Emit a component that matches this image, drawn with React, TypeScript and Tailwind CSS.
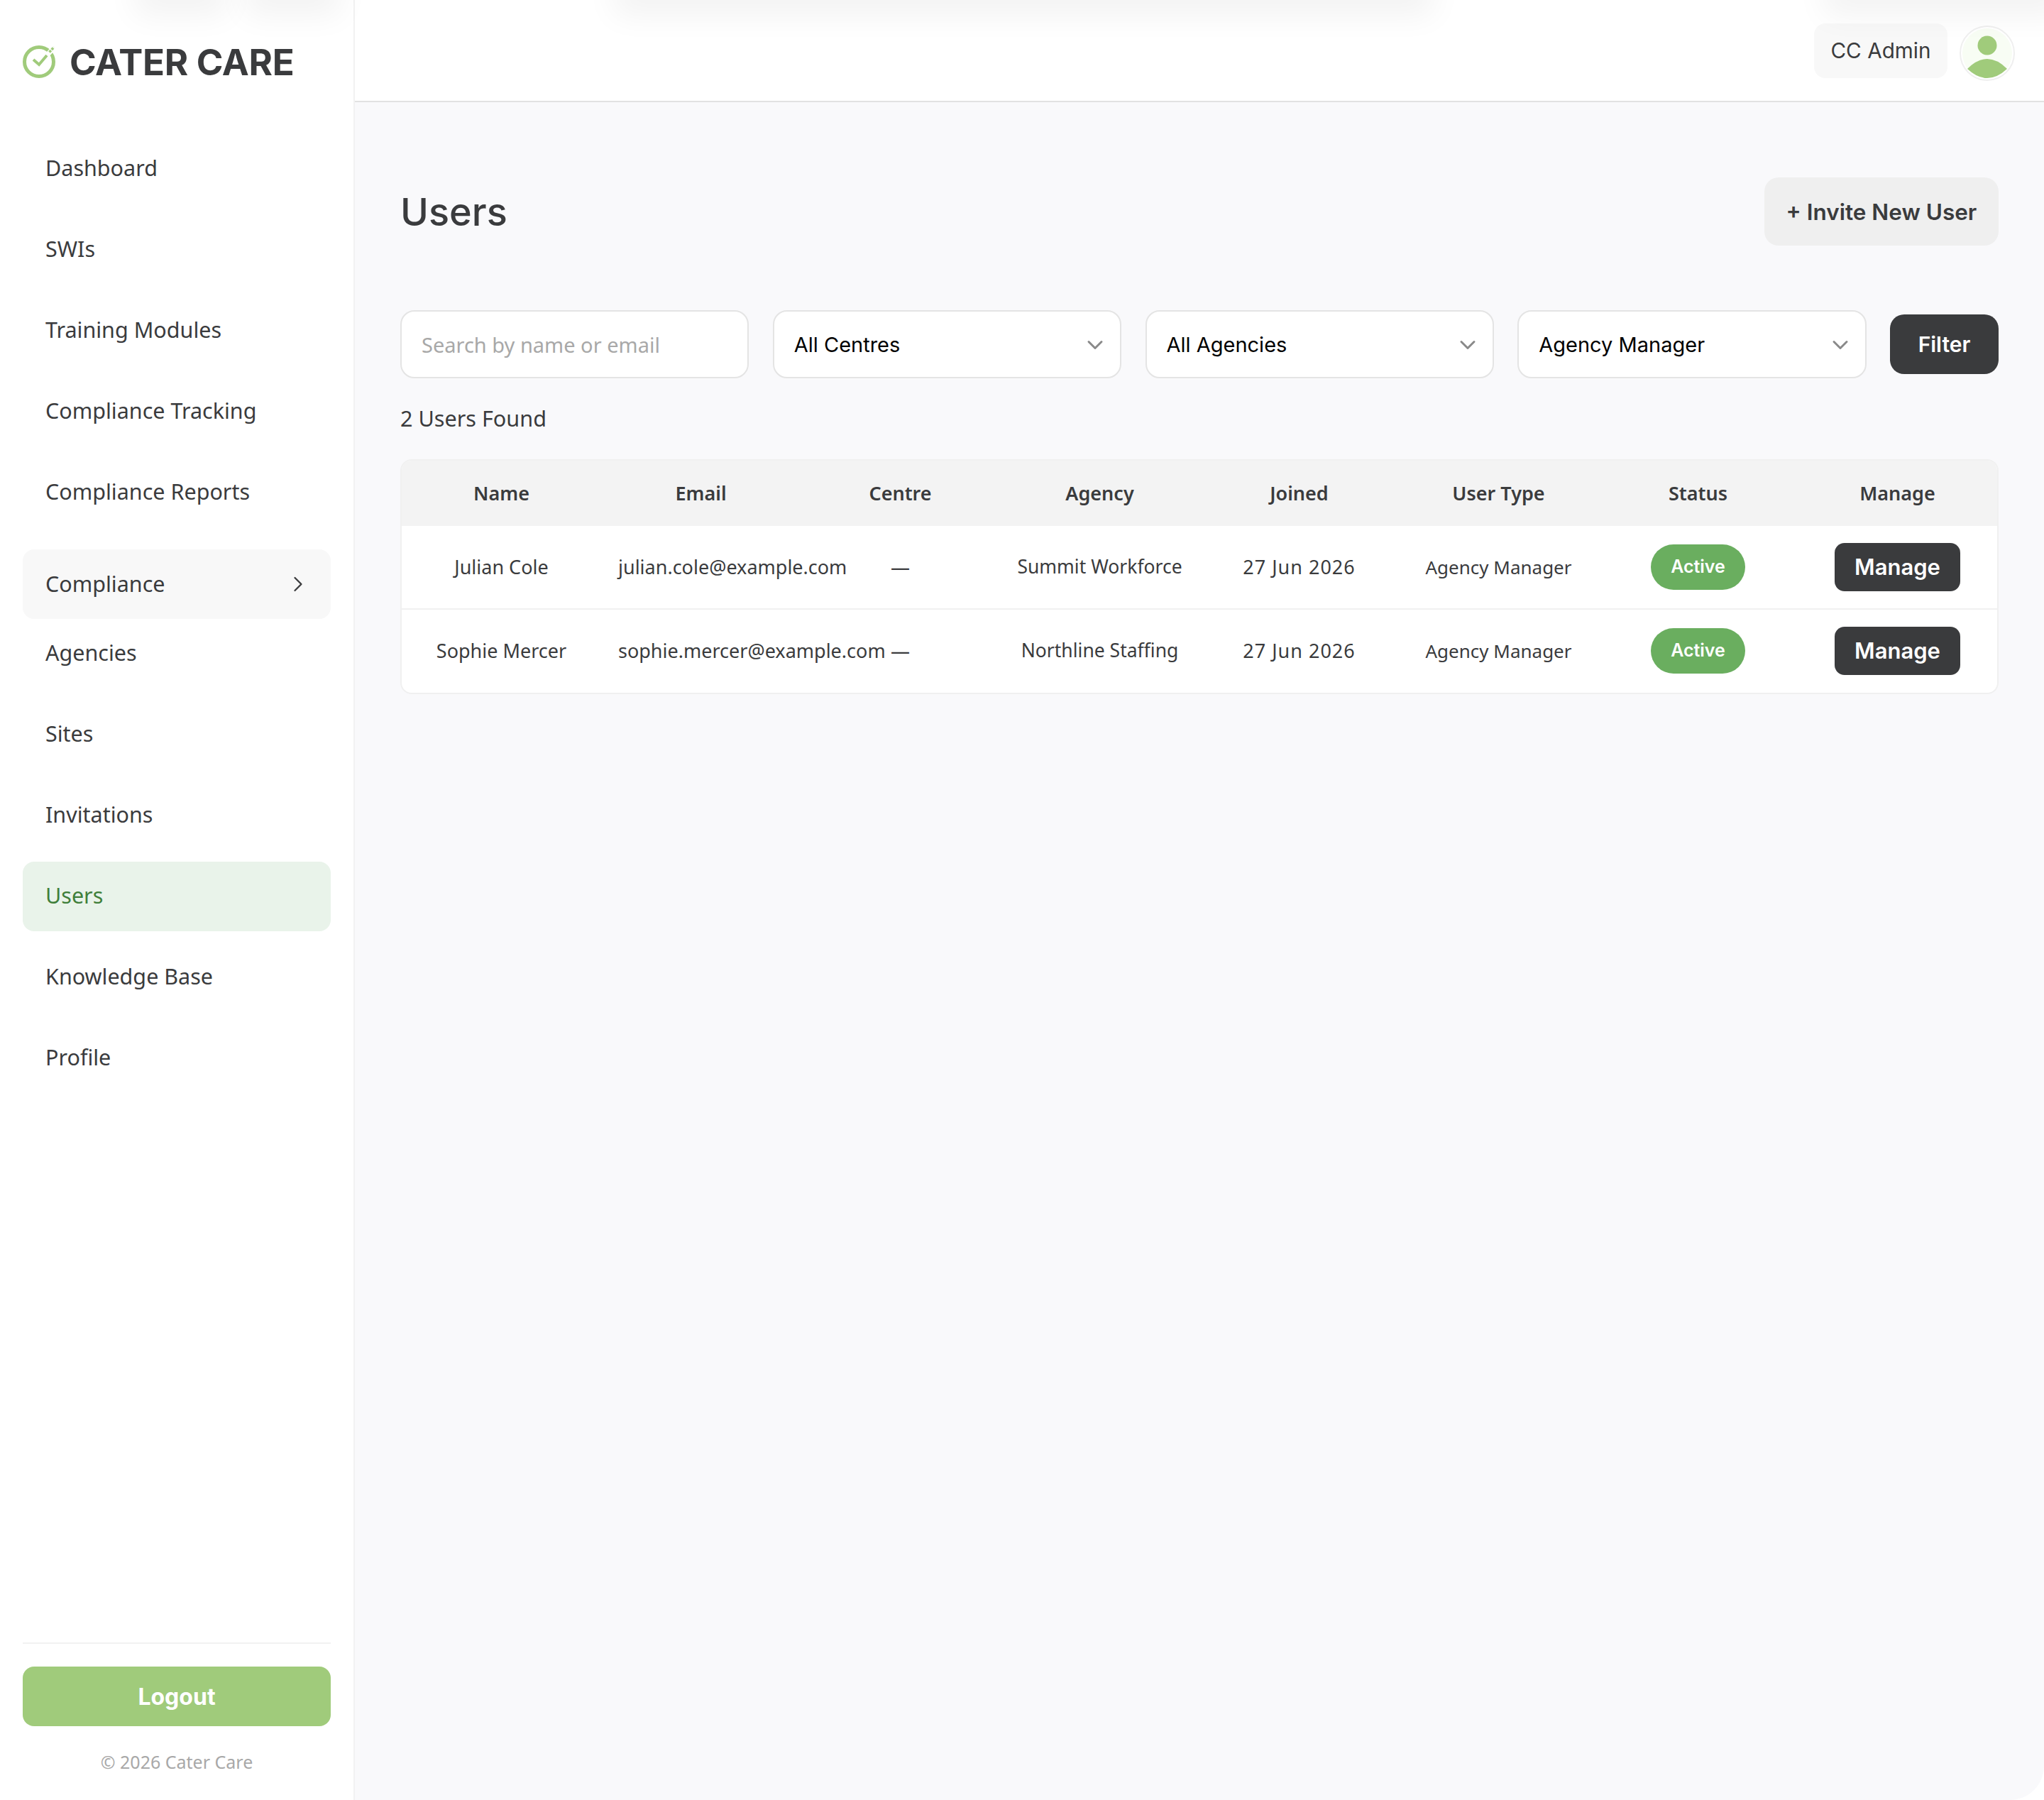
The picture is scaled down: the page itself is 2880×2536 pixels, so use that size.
import { ChevronDown, ChevronRight } from "lucide-react";

const plex = "font-['Noto_Sans','Roboto',sans-serif]";
const inter = "font-['Inter',sans-serif]";

const topNav = ["Dashboard", "SWIs", "Training Modules", "Compliance Tracking", "Compliance Reports"];
const subNav = ["Agencies", "Sites", "Invitations", "Users", "Knowledge Base", "Profile"];
const columns = ["Name", "Email", "Centre", "Agency", "Joined", "User Type", "Status", "Manage"];

const users = [
  { name: "Julian Cole", email: "julian.cole@example.com", agency: "Summit Workforce" },
  { name: "Sophie Mercer", email: "sophie.mercer@example.com", agency: "Northline Staffing" },
];

function Logo() {
  return (
    <svg viewBox="0 0 48 48" className="h-[48px] w-[48px]" fill="none">
      <circle cx="23" cy="24" r="20.500" stroke="#a0cb7b" strokeWidth="5" />
      <path d="M34 15L46 2" stroke="#ffffff" strokeWidth="7" />
      <path d="M15 21l8 7l11-13" stroke="#a0cb7b" strokeWidth="4" />
      <path d="M37.500 10.500L44 3.500" stroke="#a0cb7b" strokeWidth="3.500" strokeDasharray="3.500 1.200" />
    </svg>
  );
}

function NavItem({ label, sub }: { label: string; sub?: boolean }) {
  const active = label === "Users";
  return (
    <div
      className={`flex h-[98px] items-center rounded-[16px] pl-[32px] text-[30.5px] ${sub ? "pb-[3px]" : "pt-[1px]"} ${
        active ? "bg-[#e9f3ea] text-[#3f7f3a]" : "text-[#3a3b3d]"
      }`}
    >
      {label}
    </div>
  );
}

function FilterSelect({ label }: { label: string }) {
  return (
    <div className={`flex h-[96px] flex-1 items-center justify-between rounded-[20px] border-2 border-[#e4e4e4] bg-white pl-[28px] pr-[17px] pt-[2px] text-[29px] text-black ${inter}`}>
      {label}
      <ChevronDown className="h-[36px] w-[36px] text-[#8a8a8a]" strokeWidth={2} />
    </div>
  );
}

export default function App() {
  return (
    <div className={`relative flex min-h-[2536px] w-[2880px] overflow-hidden bg-white ${plex}`}>
      <aside className="flex w-[500px] shrink-0 flex-col border-r-2 border-[#f2f2f2] bg-white px-[32px] pb-[35px]">
        <div className={`flex h-[144px] items-center gap-[18px] pt-[30px] ${inter}`}>
          <Logo />
          <span className="text-[51px] font-bold leading-none tracking-[-0.3px] text-[#3a3b3d]">CATER CARE</span>
        </div>
        <nav className="mt-[43px] flex flex-col gap-[16px]">
          {topNav.map((label) => (
            <NavItem key={label} label={label} />
          ))}
        </nav>
        <div className="mt-[33px] flex h-[98px] items-center justify-between rounded-[16px] bg-[#f8f8f8] pb-[1px] pl-[32px] pr-[28px] text-[30.5px] text-[#3a3b3d]">
          Compliance
          <ChevronRight className="h-[36px] w-[36px]" strokeWidth={1.5} />
        </div>
        <nav className="flex flex-col gap-[16px]">
          {subNav.map((label) => (
            <NavItem key={label} label={label} sub />
          ))}
        </nav>
        <div className="mt-auto border-t-2 border-[#f2f2f2] pt-[32px]">
          <div className={`flex h-[84px] items-center justify-center rounded-[16px] bg-[#a0cb7b] pt-[2px] text-[32px] font-bold text-white ${inter}`}>
            Logout
          </div>
          <div className="mt-[32px] text-center text-[25px] text-[#a8a8a8]">© 2026 Cater Care</div>
        </div>
      </aside>

      <div className="flex min-w-0 flex-1 flex-col">
        <header className="flex h-[144px] items-center justify-end gap-[17px] border-b-2 border-[#e2e2e2] bg-white pr-[41px]">
          <div className={`flex h-[77px] w-[188px] items-center justify-center rounded-[16px] bg-[#f8f8f8] text-[29.7px] text-[#3a3b3d] ${inter}`}>
            CC Admin
          </div>
          <svg viewBox="0 0 78 78" className="mt-[7px] h-[78px] w-[78px]">
            <circle cx="39" cy="39" r="38" fill="#ffffff" stroke="#efefef" strokeWidth="2" />
            <circle cx="39" cy="39" r="35" fill="#f8fdf4" />
            <circle cx="39" cy="28" r="13.500" fill="#a0cb7b" />
            <path d="M11 61Q39 33 67 61Q39 87 11 61z" fill="#a0cb7b" />
          </svg>
        </header>

        <main className="flex-1 rounded-br-[48px] bg-[#f9f9fb] px-[64px] pt-[106px]">
          <div className="flex items-center justify-between">
            <h1 className={`pt-[2px] text-[54px] font-medium leading-none text-[#3a3b3d] ${inter}`}>Users</h1>
            <div className={`flex h-[96px] w-[330px] items-center justify-center rounded-[20px] bg-[#efefef] pt-[2px] text-[31.5px] font-semibold text-[#3a3b3d] ${inter}`}>
              + Invite New User
            </div>
          </div>

          <div className="mt-[91px] flex items-center gap-[33.5px]">
            <div className="flex h-[96px] flex-1 items-center rounded-[20px] border-2 border-[#e4e4e4] bg-white pl-[28px] pr-[17px] pt-[2px] text-[29px] text-[#a8a8a8]">
              Search by name or email
            </div>
            <FilterSelect label="All Centres" />
            <FilterSelect label="All Agencies" />
            <FilterSelect label="Agency Manager" />
            <div className={`flex h-[84px] w-[153px] items-center justify-center rounded-[20px] bg-[#3a3b3d] text-[30px] font-semibold text-white ${inter}`}>
              Filter
            </div>
          </div>

          <div className="mt-[34px] text-[30.6px] leading-[44px] text-[#3a3b3d]">2 Users Found</div>

          <div className="mt-[36px] overflow-hidden rounded-[16px] border-2 border-[#f0f0f0] bg-white">
            <div className="grid h-[92px] grid-cols-8 items-center bg-[#f3f3f3] text-center text-[27px] font-semibold text-[#3a3b3d]">
              {columns.map((col) => (
                <div key={col}>{col}</div>
              ))}
            </div>
            {users.map((user) => (
              <div key={user.email} className="grid h-[118px] grid-cols-8 items-center border-b-2 border-[#f0f0f0] text-center text-[27px] text-[#3a3b3d] last:h-[117px] last:border-b-0 last:pb-[1px]">
                <div>{user.name}</div>
                <div className="whitespace-nowrap pl-[24px] text-left">{user.email}</div>
                <div>—</div>
                <div className="text-[26.5px]">{user.agency}</div>
                <div className="tracking-[1px]">27 Jun 2026</div>
                <div className="text-[26px]">Agency Manager</div>
                <div className="flex justify-center">
                  <span className={`flex h-[64px] w-[133px] items-center justify-center rounded-full bg-[#6aae5f] text-[25px] font-semibold text-white ${inter}`}>Active</span>
                </div>
                <div className="flex justify-center">
                  <span className={`flex h-[68px] w-[177px] items-center justify-center rounded-[14px] bg-[#3a3b3d] text-[31px] font-semibold text-white ${inter}`}>Manage</span>
                </div>
              </div>
            ))}
          </div>
        </main>
      </div>

      {/* faint shadows bleeding in from above the top edge */}
      <div className="absolute -top-[60px] left-[190px] h-[60px] w-[130px] shadow-[0_22px_44px_rgba(0,0,0,0.05)]" />
      <div className="absolute -top-[60px] left-[345px] h-[60px] w-[135px] shadow-[0_22px_44px_rgba(0,0,0,0.05)]" />
      <div className="absolute -top-[60px] left-[865px] h-[60px] w-[1155px] shadow-[0_22px_44px_rgba(0,0,0,0.05)]" />
      <div className="absolute -top-[60px] left-[2570px] h-[60px] w-[340px] shadow-[0_22px_44px_rgba(0,0,0,0.05)]" />
    </div>
  );
}
